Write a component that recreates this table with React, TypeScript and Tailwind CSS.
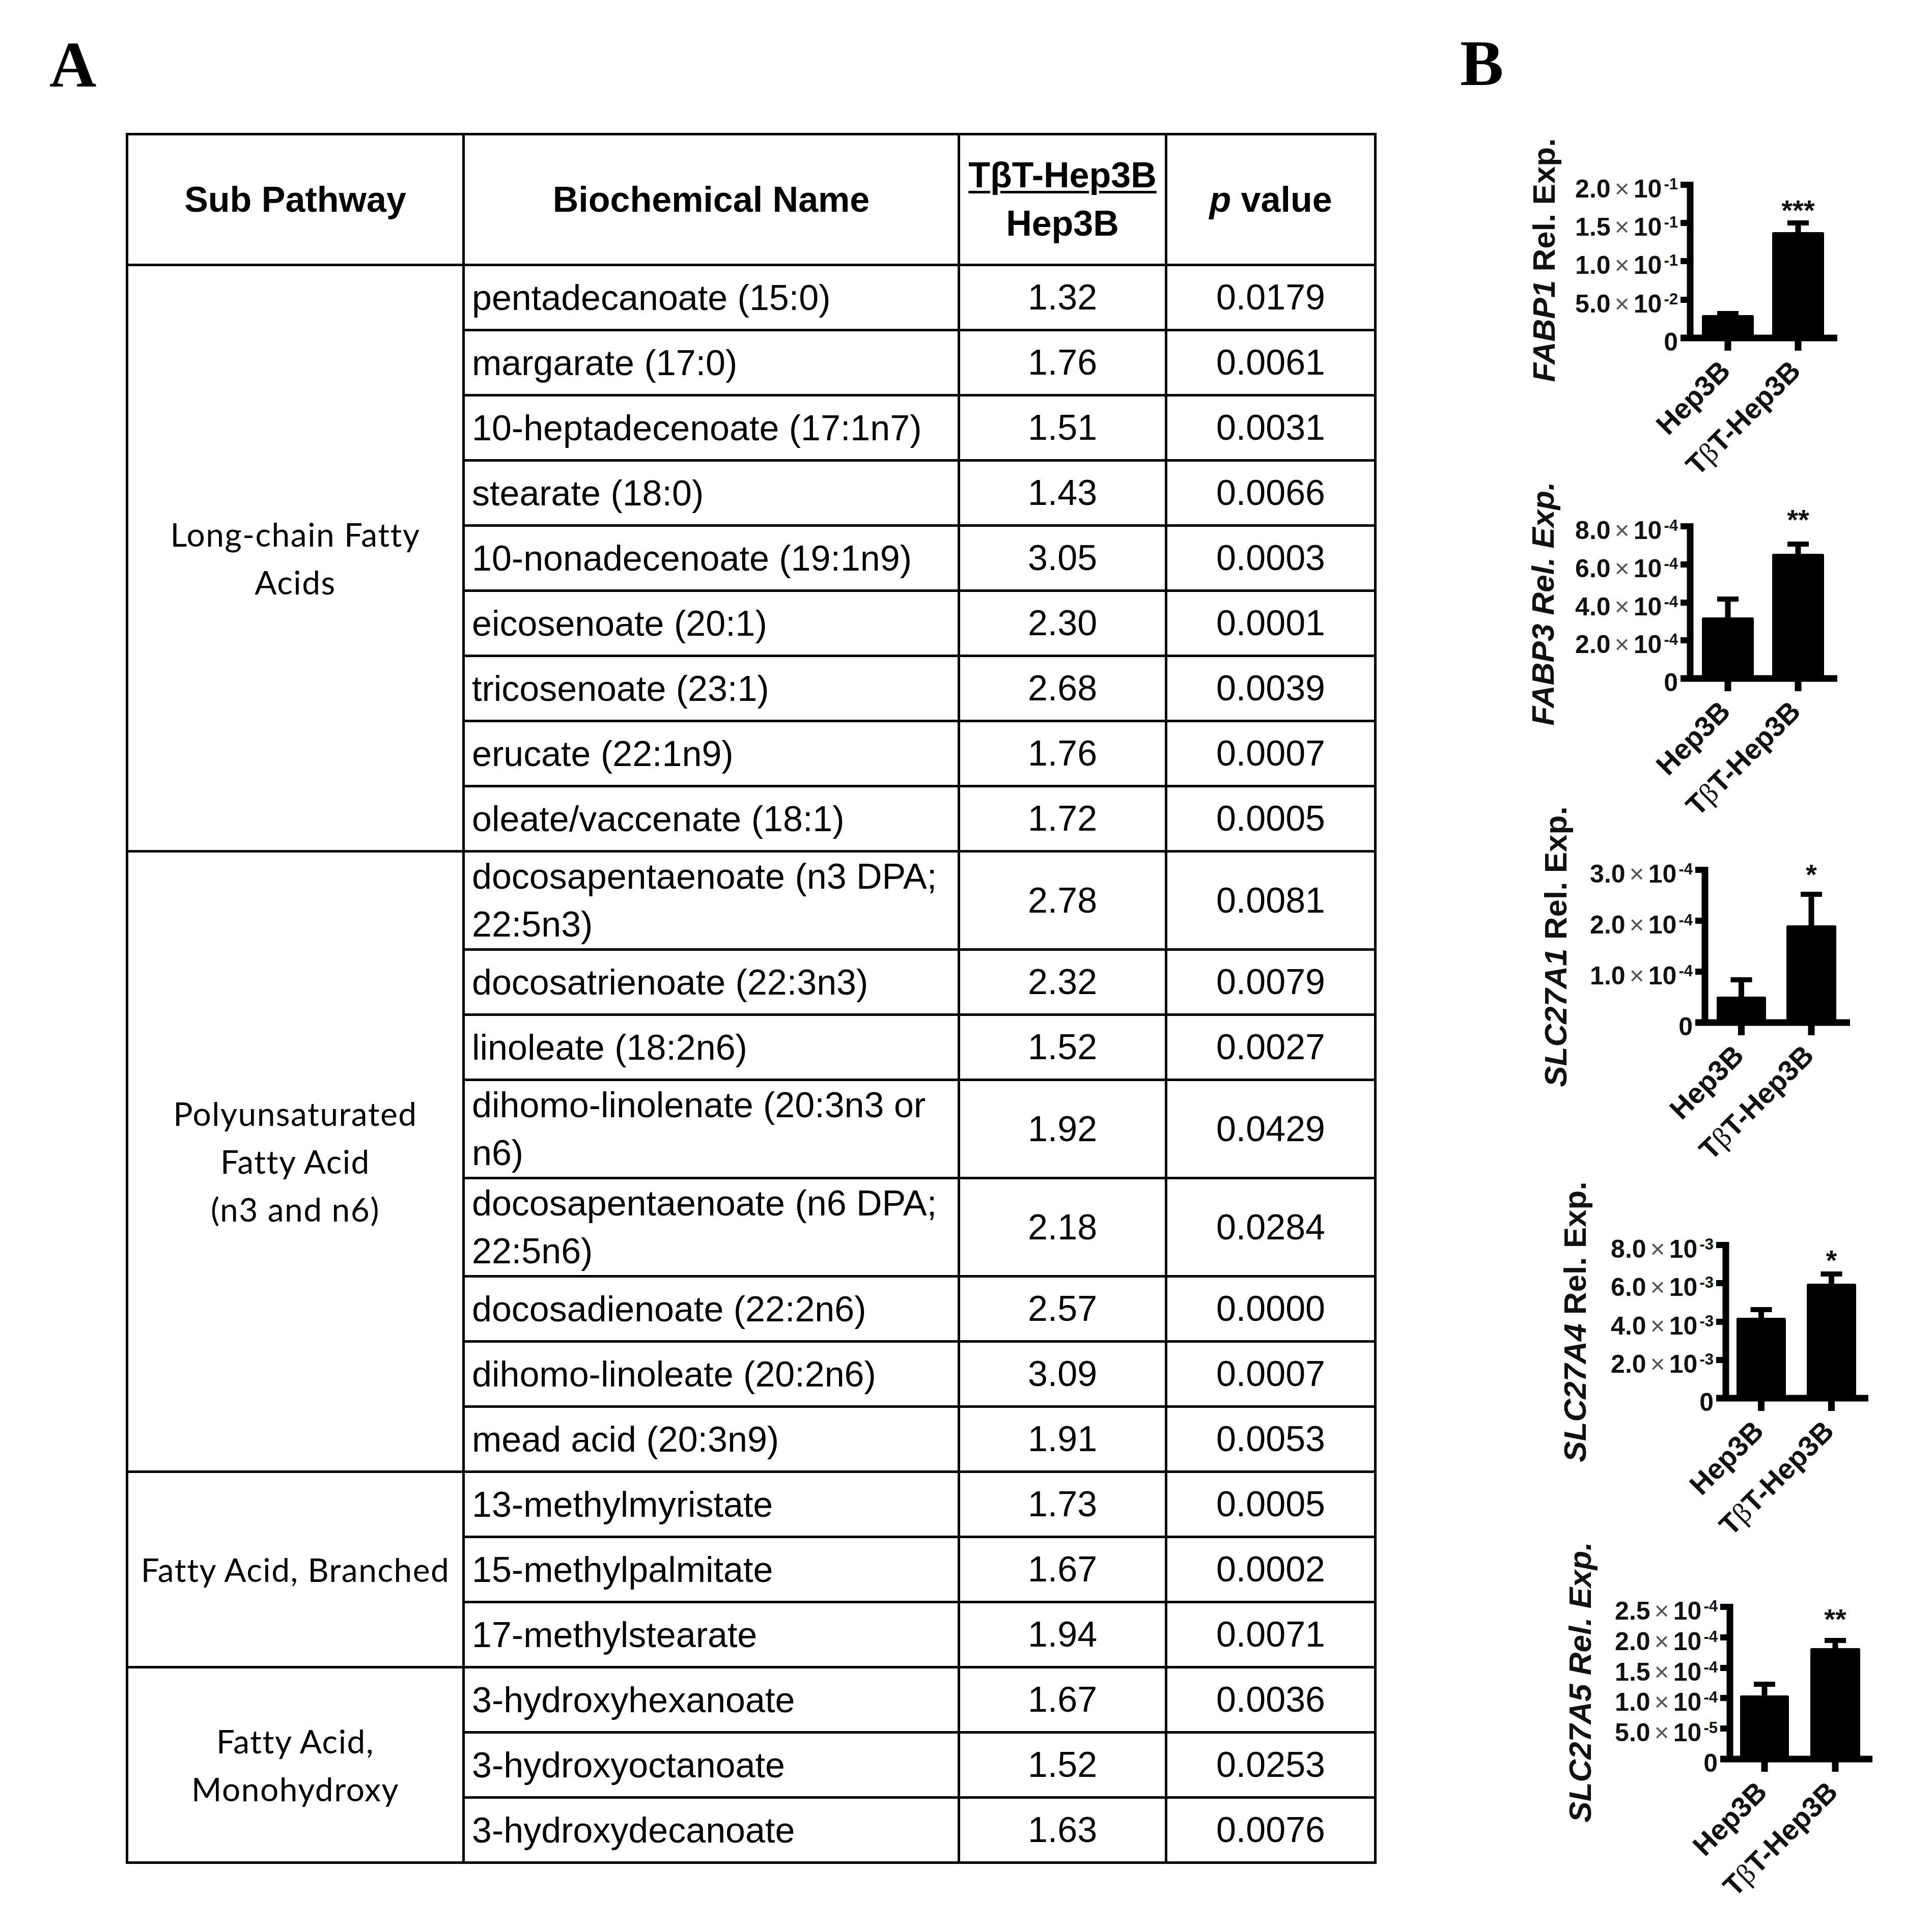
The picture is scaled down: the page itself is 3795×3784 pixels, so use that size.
import React from 'react';

type Row = { name: React.ReactNode; ratio: string; p: string; tall?: boolean };
type Group = { label: React.ReactNode; rows: Row[] };

const groups: Group[] = [
  {
    label: (
      <>
        Long-chain Fatty
        <br />
        Acids
      </>
    ),
    rows: [
      { name: 'pentadecanoate (15:0)', ratio: '1.32', p: '0.0179' },
      { name: 'margarate (17:0)', ratio: '1.76', p: '0.0061' },
      { name: '10-heptadecenoate (17:1n7)', ratio: '1.51', p: '0.0031' },
      { name: 'stearate (18:0)', ratio: '1.43', p: '0.0066' },
      { name: '10-nonadecenoate (19:1n9)', ratio: '3.05', p: '0.0003' },
      { name: 'eicosenoate (20:1)', ratio: '2.30', p: '0.0001' },
      { name: 'tricosenoate (23:1)', ratio: '2.68', p: '0.0039' },
      { name: 'erucate (22:1n9)', ratio: '1.76', p: '0.0007' },
      { name: 'oleate/vaccenate (18:1)', ratio: '1.72', p: '0.0005' },
    ],
  },
  {
    label: (
      <>
        Polyunsaturated
        <br />
        Fatty Acid
        <br />
        (n3 and n6)
      </>
    ),
    rows: [
      {
        name: (
          <>
            docosapentaenoate (n3 DPA;
            <br />
            22:5n3)
          </>
        ),
        ratio: '2.78',
        p: '0.0081',
        tall: true,
      },
      { name: 'docosatrienoate (22:3n3)', ratio: '2.32', p: '0.0079' },
      { name: 'linoleate (18:2n6)', ratio: '1.52', p: '0.0027' },
      {
        name: (
          <>
            dihomo-linolenate (20:3n3 or
            <br />
            n6)
          </>
        ),
        ratio: '1.92',
        p: '0.0429',
        tall: true,
      },
      {
        name: (
          <>
            docosapentaenoate (n6 DPA;
            <br />
            22:5n6)
          </>
        ),
        ratio: '2.18',
        p: '0.0284',
        tall: true,
      },
      { name: 'docosadienoate (22:2n6)', ratio: '2.57', p: '0.0000' },
      { name: 'dihomo-linoleate (20:2n6)', ratio: '3.09', p: '0.0007' },
      { name: 'mead acid (20:3n9)', ratio: '1.91', p: '0.0053' },
    ],
  },
  {
    label: 'Fatty Acid, Branched',
    rows: [
      { name: '13-methylmyristate', ratio: '1.73', p: '0.0005' },
      { name: '15-methylpalmitate', ratio: '1.67', p: '0.0002' },
      { name: '17-methylstearate', ratio: '1.94', p: '0.0071' },
    ],
  },
  {
    label: (
      <>
        Fatty Acid,
        <br />
        Monohydroxy
      </>
    ),
    rows: [
      { name: '3-hydroxyhexanoate', ratio: '1.67', p: '0.0036' },
      { name: '3-hydroxyoctanoate', ratio: '1.52', p: '0.0253' },
      { name: '3-hydroxydecanoate', ratio: '1.63', p: '0.0076' },
    ],
  },
];

type Tick = { y: number; m: string; e?: string };
type Bar = { x1: number; x2: number; top: number; err: number };
type ChartSpec = {
  y0: number;
  h: number;
  ax: number;
  top: number;
  base: number;
  xR: number;
  ticks: Tick[];
  bars: Bar[];
  stars: string;
  starY: number;
  gene: string;
  allItalic: boolean;
  titleX: number;
  titleY: number;
};

const charts: ChartSpec[] = [
  {
    y0: 255, h: 675, ax: 3322, top: 363, base: 664, xR: 3611,
    ticks: [
      { y: 363, m: '2.0', e: '-1' },
      { y: 438, m: '1.5', e: '-1' },
      { y: 513, m: '1.0', e: '-1' },
      { y: 589, m: '5.0', e: '-2' },
      { y: 664, m: '0' },
    ],
    bars: [
      { x1: 3345, x2: 3447, top: 619, err: 613 },
      { x1: 3483, x2: 3585, top: 456, err: 435 },
    ],
    stars: '***', starY: 402,
    gene: 'FABP1', allItalic: false, titleX: 3056, titleY: 511,
  },
  {
    y0: 930, h: 640, ax: 3322, top: 1034, base: 1333, xR: 3611,
    ticks: [
      { y: 1034, m: '8.0', e: '-4' },
      { y: 1109, m: '6.0', e: '-4' },
      { y: 1184, m: '4.0', e: '-4' },
      { y: 1258, m: '2.0', e: '-4' },
      { y: 1333, m: '0' },
    ],
    bars: [
      { x1: 3345, x2: 3447, top: 1213, err: 1174 },
      { x1: 3483, x2: 3585, top: 1088, err: 1066 },
    ],
    stars: '**', starY: 1010,
    gene: 'FABP3', allItalic: true, titleX: 3054, titleY: 1186,
  },
  {
    y0: 1570, h: 735, ax: 3351, top: 1709, base: 2009, xR: 3636,
    ticks: [
      { y: 1709, m: '3.0', e: '-4' },
      { y: 1809, m: '2.0', e: '-4' },
      { y: 1909, m: '1.0', e: '-4' },
      { y: 2009, m: '0' },
    ],
    bars: [
      { x1: 3374, x2: 3471, top: 1958, err: 1922 },
      { x1: 3511, x2: 3609, top: 1818, err: 1754 },
    ],
    stars: '*', starY: 1707,
    gene: 'SLC27A1', allItalic: false, titleX: 3079, titleY: 1860,
  },
  {
    y0: 2305, h: 710, ax: 3392, top: 2446, base: 2747, xR: 3672,
    ticks: [
      { y: 2446, m: '8.0', e: '-3' },
      { y: 2521, m: '6.0', e: '-3' },
      { y: 2597, m: '4.0', e: '-3' },
      { y: 2672, m: '2.0', e: '-3' },
      { y: 2747, m: '0' },
    ],
    bars: [
      { x1: 3413, x2: 3510, top: 2589, err: 2570 },
      { x1: 3551, x2: 3648, top: 2522, err: 2500 },
    ],
    stars: '*', starY: 2465,
    gene: 'SLC27A4', allItalic: false, titleX: 3117, titleY: 2597,
  },
  {
    y0: 3015, h: 769, ax: 3400, top: 3157, base: 3456, xR: 3680,
    ticks: [
      { y: 3157, m: '2.5', e: '-4' },
      { y: 3217, m: '2.0', e: '-4' },
      { y: 3277, m: '1.5', e: '-4' },
      { y: 3336, m: '1.0', e: '-4' },
      { y: 3396, m: '5.0', e: '-5' },
      { y: 3456, m: '0' },
    ],
    bars: [
      { x1: 3420, x2: 3516, top: 3331, err: 3306 },
      { x1: 3558, x2: 3656, top: 3238, err: 3220 },
    ],
    stars: '**', starY: 3170,
    gene: 'SLC27A5', allItalic: true, titleX: 3127, titleY: 3305,
  },
];

const SANS = 'Liberation Sans, Arial, sans-serif';

function Chart({ c }: { c: ChartSpec }) {
  const lw = 13;
  const xL = c.ax - 19;
  const centers = c.bars.map((b) => (b.x1 + b.x2) / 2);
  const starX = centers[1];
  return (
    <svg
      width={935}
      height={c.h}
      viewBox={`2860 ${c.y0} 935 ${c.h}`}
      className="block overflow-visible"
      fontFamily={SANS}
    >
      {/* bars + error bars */}
      {c.bars.map((b, i) => (
        <g key={i} fill="#000">
          <rect x={b.x1} y={b.top} width={b.x2 - b.x1} height={c.base - b.top} rx={3} />
          <rect x={centers[i] - 5.5} y={b.err} width={11} height={b.top - b.err + 2} />
          <rect x={centers[i] - 21} y={b.err - 2} width={42} height={10} />
        </g>
      ))}
      {/* axes */}
      <rect x={c.ax - lw / 2} y={c.top - 6} width={lw} height={c.base - c.top + 12} fill="#000" />
      <rect x={xL} y={c.base - lw / 2} width={c.xR - xL} height={lw} fill="#000" />
      {c.ticks.map((t) => (
        <rect key={t.y} x={xL} y={t.y - 6} width={19} height={12} fill="#000" />
      ))}
      {centers.map((cx) => (
        <rect key={cx} x={cx - 6.5} y={c.base} width={13} height={25} fill="#000" />
      ))}
      {/* tick labels */}
      {c.ticks.map((t) => (
        <text key={'l' + t.y} x={c.ax - 24} y={t.y + 25} textAnchor="end" fontSize={50} fontWeight={700} fill="#111">
          <tspan>{t.m}</tspan>
          {t.e && (
            <>
              <tspan dx={8} fontWeight={400} fill="#555">×</tspan>
              <tspan dx={8}>10</tspan>
              <tspan dx={4} dy={-16} fontSize={31}>{t.e}</tspan>
            </>
          )}
        </text>
      ))}
      {/* stars */}
      <text x={starX} y={c.starY + 30} textAnchor="middle" fontSize={56} fontWeight={700} fill="#111">
        {c.stars}
      </text>
      {/* x labels */}
      <text
        transform={`translate(${centers[0] + 8},${c.base + 68}) rotate(-45)`}
        textAnchor="end"
        fontSize={56}
        fontWeight={700}
        fill="#111"
      >
        Hep3B
      </text>
      <text
        transform={`translate(${centers[1] + 8},${c.base + 68}) rotate(-45)`}
        textAnchor="end"
        fontSize={56}
        fontWeight={700}
        fill="#111"
      >
        T<tspan fontFamily="Liberation Serif, serif" fontWeight={400}>β</tspan>T-Hep3B
      </text>
      {/* y title */}
      <text
        transform={`translate(${c.titleX},${c.titleY}) rotate(-90)`}
        textAnchor="middle"
        fontSize={62}
        fontWeight={700}
        fill="#111"
      >
        <tspan fontStyle="italic">{c.gene}</tspan>
        <tspan fontStyle={c.allItalic ? 'italic' : 'normal'}>{' Rel. Exp.'}</tspan>
      </text>
    </svg>
  );
}

export default function App() {
  const cell = 'border-[5px] border-black p-0 align-middle';
  return (
    <div className="w-[3795px] h-[3784px] bg-white flex overflow-hidden text-black">
      {/* panel A */}
      <div className="w-[2858px] shrink-0 pl-[97px] pt-[63px]">
        <div className="h-[128px] font-['Liberation_Serif',serif] font-bold text-[128px] leading-none">A</div>
        <div className="ml-[150px] mt-[70px]">
          <table className="table-fixed border-collapse w-[2452px] font-['Liberation_Sans',Arial,sans-serif] text-[70px]">
            <colgroup>
              <col className="w-[661px]" />
              <col className="w-[973px]" />
              <col className="w-[407px]" />
              <col className="w-[411px]" />
            </colgroup>
            <thead>
              <tr className="h-[257px] font-bold">
                <th className={`${cell} text-center`}>Sub Pathway</th>
                <th className={`${cell} text-center`}>Biochemical Name</th>
                <th className={`${cell} text-center leading-[95px]`}>
                  <div className="underline decoration-[5px] underline-offset-[7px]">TβT-Hep3B</div>
                  <div>Hep3B</div>
                </th>
                <th className={`${cell} text-center`}>
                  <span className="italic">p</span> value
                </th>
              </tr>
            </thead>
            <tbody>
              {groups.map((g, gi) =>
                g.rows.map((r, ri) => (
                  <tr key={`${gi}-${ri}`} className={r.tall ? 'h-[191px]' : 'h-[128px]'}>
                    {ri === 0 && (
                      <td
                        rowSpan={g.rows.length}
                        className={`${cell} text-center font-['Lato',sans-serif] text-[64px] tracking-[1.5px] leading-[94px]`}
                      >
                        {g.label}
                      </td>
                    )}
                    <td className={`${cell} pl-[14px] leading-[94px] whitespace-nowrap`}>{r.name}</td>
                    <td className={`${cell} text-center`}>{r.ratio}</td>
                    <td className={`${cell} text-center`}>{r.p}</td>
                  </tr>
                ))
              )}
            </tbody>
          </table>
        </div>
      </div>

      {/* panel B */}
      <div className="w-[937px] shrink-0 flex flex-col">
        <div className="h-[255px] pl-[10px] pt-[60px]">
          <div className="font-['Liberation_Serif',serif] font-bold text-[128px] leading-none">B</div>
        </div>
        {charts.map((c) => (
          <Chart key={c.gene} c={c} />
        ))}
      </div>
    </div>
  );
}
